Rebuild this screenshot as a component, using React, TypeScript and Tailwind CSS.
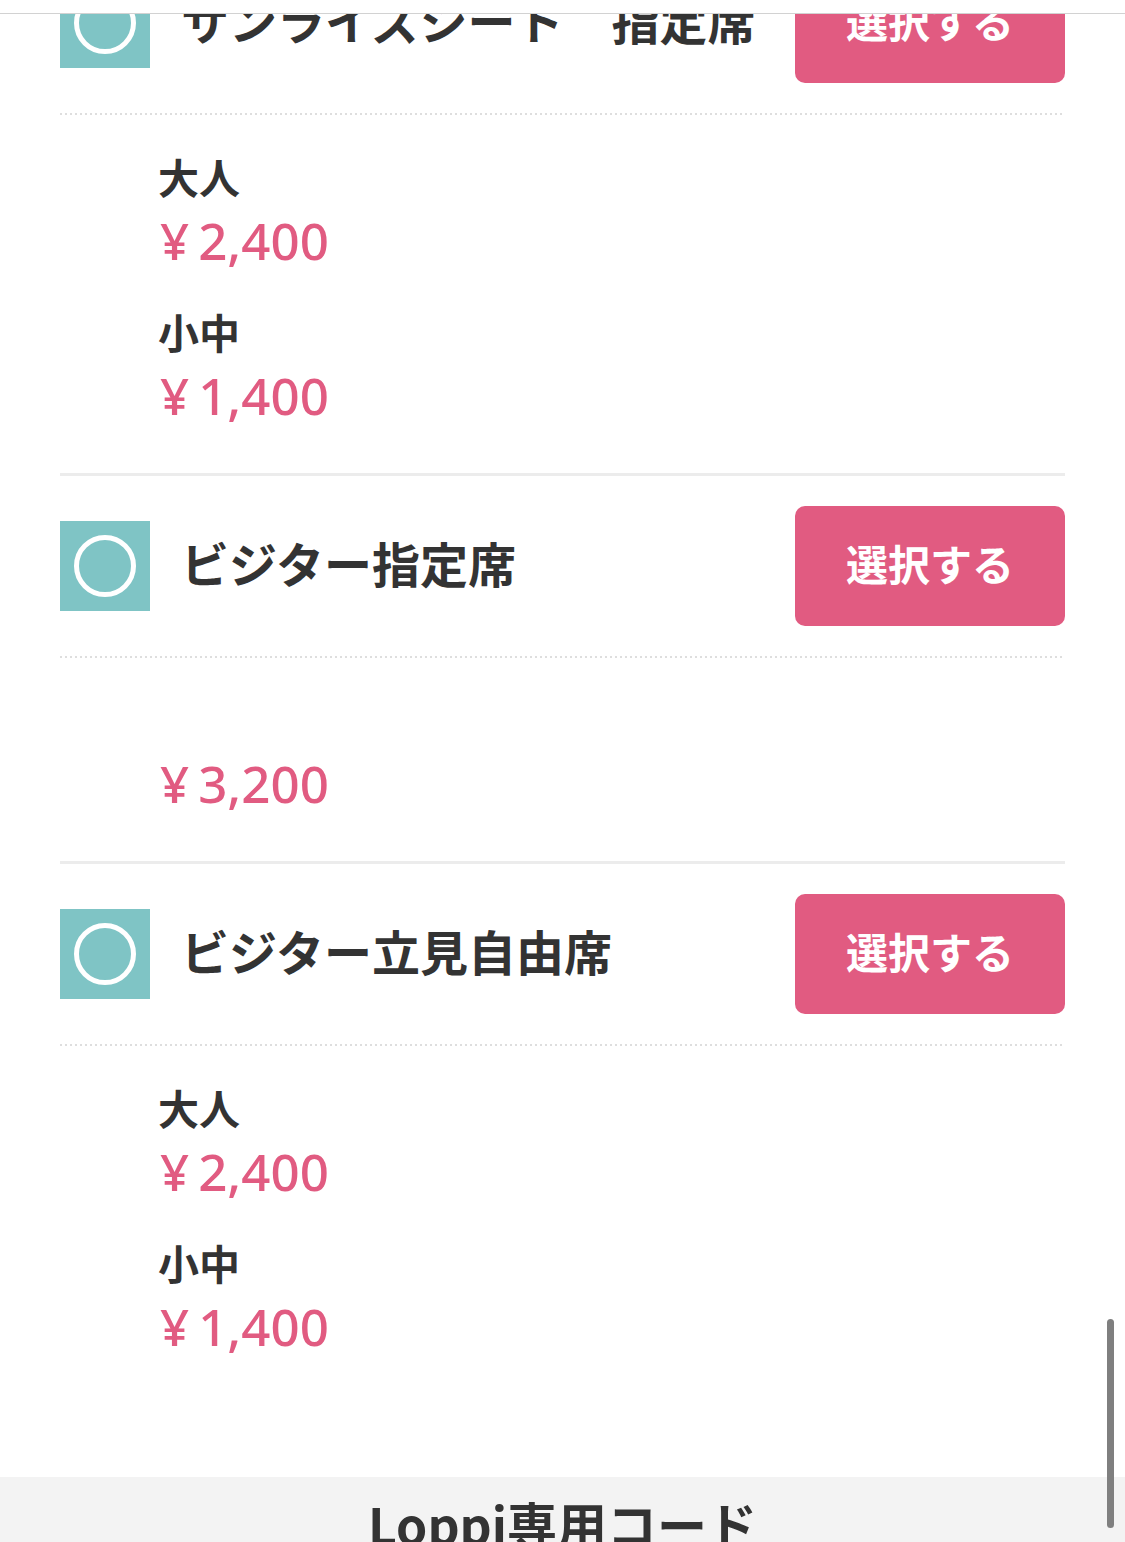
import React from "react";

interface PriceItem {
  label: string;
  price: string;
}

interface SeatRow {
  name: string;
  prices: PriceItem[];
}

const rows: SeatRow[] = [
  {
    name: "サンライズシート　指定席",
    prices: [
      { label: "大人", price: "2,400" },
      { label: "小中", price: "1,400" },
    ],
  },
  {
    name: "ビジター指定席",
    prices: [{ label: "", price: "3,200" }],
  },
  {
    name: "ビジター立見自由席",
    prices: [
      { label: "大人", price: "2,400" },
      { label: "小中", price: "1,400" },
    ],
  },
];

function RadioIcon() {
  return (
    <div className="flex h-[90px] w-[90px] shrink-0 items-center justify-center bg-[#7fc4c5]">
      <div className="h-[62px] w-[62px] rounded-full border-[5px] border-white" />
    </div>
  );
}

function SeatSection({ row }: { row: SeatRow }) {
  return (
    <section className="border-t-[3px] border-[#ececec]">
      <div className="flex items-center justify-between py-[30px]">
        <div className="flex items-center gap-[31px]">
          <RadioIcon />
          <h3 className="whitespace-pre pb-[9px] text-[48px] font-bold leading-none text-[#333333]">
            {row.name}
          </h3>
        </div>
        <button className="flex h-[120px] w-[270px] items-center justify-center rounded-[10px] bg-[#e15b81] pb-[8px] text-[42px] font-bold text-white">
          選択する
        </button>
      </div>
      <div className="h-[2px] bg-[linear-gradient(to_right,#dedede_50%,transparent_50%)] bg-[length:5px_2px]" />
      <div className="flex flex-col gap-[33px] pb-[48px] pl-[98px] pt-[33px]">
        {row.prices.map((p, i) => (
          <div key={i} className="flex flex-col">
            <span className="h-[60px] text-[41px] font-bold leading-[57px] text-[#333333]">
              {p.label}
            </span>
            <span className="h-[62px] font-['Noto_Sans','Noto_Sans_CJK_JP',sans-serif] text-[51px] font-medium leading-[64px] text-[#e15b81]">
              <span className="ml-[2px] mr-[9px]">¥</span>
              {p.price}
            </span>
          </div>
        ))}
      </div>
    </section>
  );
}

export default function App() {
  return (
    <div className="relative h-[1542px] w-[1125px] overflow-hidden bg-white font-['Noto_Sans_CJK_JP','Noto_Sans',sans-serif]">
      {/* fixed header edge */}
      <div className="absolute inset-x-0 top-0 z-10 h-[14px] border-b border-[#d2d2d2] bg-white" />

      <div className="-mt-[70px] mb-[73px] px-[60px]">
        {rows.map((row, i) => (
          <SeatSection key={i} row={row} />
        ))}
      </div>

      <div className="bg-[#f3f3f3] pt-[10px] text-center">
        <h2 className="text-[50px] font-bold leading-[72px] text-[#333333]">Loppi専用コード</h2>
      </div>

      {/* overlay scrollbar */}
      <div className="absolute right-[11px] top-[1319px] z-20 h-[209px] w-[7px] rounded-full bg-[#7f7f7f]" />
    </div>
  );
}
